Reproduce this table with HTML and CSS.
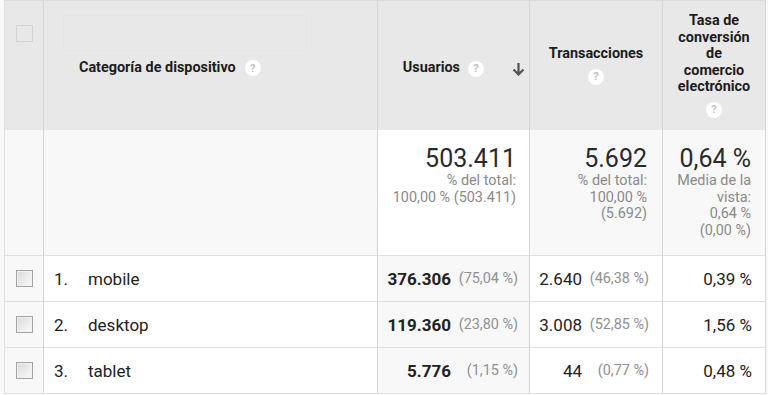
FILE: index.html
```html
<!DOCTYPE html>
<html lang="es">
<head>
<meta charset="utf-8">
<title>Categoría de dispositivo</title>
<link rel="stylesheet" href="styles.css">
</head>
<body>
<div class="report">
  <!-- header -->
  <div class="cell head head-check"><span class="check check-head"></span></div>
  <div class="cell head head-dim">
    <div class="dim-filter"></div>
    <div class="dim-label"><span class="head-label">Categoría de dispositivo</span><span class="help">?</span></div>
  </div>
  <div class="cell head head-users">
    <span class="head-label">Usuarios</span><span class="help">?</span>
    <svg class="sort" viewBox="0 0 13 14" width="13" height="14"><path d="M6.5 1V12.5M1.5 7.5L6.5 12.5L11.5 7.5" fill="none" stroke="#555" stroke-width="2.2"/></svg>
  </div>
  <div class="cell head head-metric">
    <span class="head-label">Transacciones</span><span class="help">?</span>
  </div>
  <div class="cell head head-metric head-rate">
    <span class="head-label">Tasa de<br>conversión<br>de<br>comercio<br>electrónico</span><span class="help">?</span>
  </div>

  <!-- summary -->
  <div class="cell sum"></div>
  <div class="cell sum"></div>
  <div class="cell sum sum-users">
    <div class="big">503.411</div>
    <div class="sub">% del total:<br>100,00 % (503.411)</div>
  </div>
  <div class="cell sum sum-trans">
    <div class="big">5.692</div>
    <div class="sub">% del total:<br>100,00 %<br>(5.692)</div>
  </div>
  <div class="cell sum sum-rate">
    <div class="big">0,64 %</div>
    <div class="sub">Media de la<br>vista:<br>0,64 %<br>(0,00 %)</div>
  </div>

  <!-- rows -->
  <div class="cell row row-check"><span class="check"></span></div>
  <div class="cell row row-dim"><span class="rank">1.</span><span class="name">mobile</span></div>
  <div class="cell row row-users"><span class="num">376.306</span><span class="pct">(75,04 %)</span></div>
  <div class="cell row row-trans"><span class="val">2.640</span><span class="pct">(46,38 %)</span></div>
  <div class="cell row row-rate">0,39 %</div>

  <div class="cell row row-check"><span class="check"></span></div>
  <div class="cell row row-dim"><span class="rank">2.</span><span class="name">desktop</span></div>
  <div class="cell row row-users"><span class="num">119.360</span><span class="pct">(23,80 %)</span></div>
  <div class="cell row row-trans"><span class="val">3.008</span><span class="pct">(52,85 %)</span></div>
  <div class="cell row row-rate">1,56 %</div>

  <div class="cell row row-check"><span class="check"></span></div>
  <div class="cell row row-dim"><span class="rank">3.</span><span class="name">tablet</span></div>
  <div class="cell row row-users"><span class="num">5.776</span><span class="pct">(1,15 %)</span></div>
  <div class="cell row row-trans"><span class="val">44</span><span class="pct">(0,77 %)</span></div>
  <div class="cell row row-rate">0,48 %</div>
</div>
</body>
</html>
```
FILE: styles.css
```css
* { box-sizing: border-box; }
html, body { margin: 0; padding: 0; }
body {
  background: #f9f9f9;
  font-family: Roboto, "Liberation Sans", Arial, sans-serif;
  color: #222;
}
.report {
  display: grid;
  grid-template-columns: 39px 334px 152px 133px 103px;
  grid-template-rows: 129px 126px 46px 46px 46px;
  margin-left: 4px;
  width: max-content;
  border-left: 1px solid #e0e0e0;
  border-top: 1px solid #dcdcdc;
}
.cell {
  border-right: 1px solid #d6d6d6;
  min-width: 0;
}
/* header */
.head {
  background: #e8e8e8;
}
.head-label {
  font-weight: 700;
  font-size: 14.4px;
  line-height: 16.6px;
  color: #1c1c1c;
}
.help {
  display: inline-flex;
  align-items: center;
  justify-content: center;
  width: 16px;
  height: 16px;
  border-radius: 50%;
  background: #fff;
  color: #c2c2c2;
  font-size: 11px;
  font-weight: 700;
  line-height: 1;
  flex: none;
}
.head-check {
  display: flex;
  justify-content: center;
  padding-top: 24px;
}
.check {
  display: block;
  width: 17px;
  height: 17px;
  border: 1px solid #a3a3a3;
  background: linear-gradient(135deg, #d9d9d9, #fbfbfb);
  box-shadow: inset 0 0 0 1px #f1f1f1;
}
.check-head {
  border-color: #d3d3d3;
  background: transparent;
  box-shadow: none;
}
.head-dim {
  padding-top: 14px;
}
.dim-filter {
  margin-left: 19px;
  width: 244px;
  height: 36px;
  border: 1px solid #e5e5e5;
}
.dim-label {
  display: flex;
  align-items: center;
  margin-top: 9px;
  padding-left: 35px;
}
.dim-label .help { margin-left: 9px; }
.head-users {
  display: flex;
  align-items: center;
  justify-content: flex-end;
  padding-top: 6px;
  padding-right: 4px;
}
.head-users .help { margin-left: 8px; margin-right: 28px; }
.sort { display: block; }
.head-metric {
  display: flex;
  flex-direction: column;
  align-items: center;
  justify-content: center;
  gap: 6px;
  text-align: center;
  padding: 0 6px;
}
/* summary */
.sum {
  background: #f8f8f8;
  border-bottom: 1px solid #e0e0e0;
  text-align: right;
  padding-top: 14px;
}
.sum-users { background: #fff; padding-right: 13px; }
.sum-trans { padding-right: 15px; }
.sum-rate { padding-right: 14px; }
.big {
  font-size: 25px;
  line-height: 29px;
  color: #2a2a2a;
}
.sub {
  font-size: 14.4px;
  line-height: 16.6px;
  color: #8a8a8a;
}
/* rows */
.row {
  background: #fff;
  border-bottom: 1px solid #e0e0e0;
  display: flex;
  align-items: center;
  font-size: 17px;
  color: #222;
}
.row-check {
  background: #f8f8f8;
  justify-content: center;
}
.row-dim { padding-left: 10px; }
.rank { width: 34px; }
.row-users {
  background: #f8f8f8;
  justify-content: flex-end;
  padding-right: 11px;
}
.num { font-weight: 700; }
.pct {
  min-width: 61px;
  margin-left: 6px;
  text-align: right;
  font-size: 14.4px;
  color: #909090;
}
.row-trans {
  justify-content: flex-end;
  padding-right: 13px;
}
.row-rate {
  justify-content: flex-end;
  padding-right: 13px;
}
```
